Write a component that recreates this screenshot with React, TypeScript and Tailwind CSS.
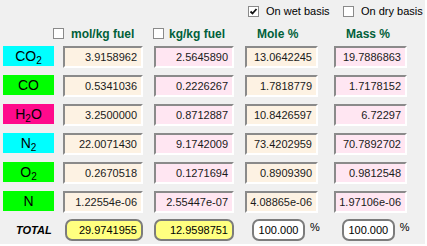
import React from "react";

const font = { fontFamily: '"Liberation Sans", Arial, sans-serif' };

type Row = { label: React.ReactNode; bg: string; v: [string, string, string, string] };

const Sub = ({ c }: { c: string }) => (
  <span className="relative top-[3px] text-[10px] leading-none">{c}</span>
);

const rows: Row[] = [
  { label: <>CO<Sub c="2" /></>, bg: "bg-[#00ffff]", v: ["3.9158962", "2.5645890", "13.0642245", "19.7886863"] },
  { label: <>CO</>, bg: "bg-[#00ff00]", v: ["0.5341036", "0.2226267", "1.7818779", "1.7178152"] },
  { label: <>H<Sub c="2" />O</>, bg: "bg-[#ff0a8c]", v: ["3.2500000", "0.8712887", "10.8426597", "6.72297"] },
  { label: <>N<Sub c="2" /></>, bg: "bg-[#00ffff]", v: ["22.0071430", "9.1742009", "73.4202959", "70.7892702"] },
  { label: <>O<Sub c="2" /></>, bg: "bg-[#00ff00]", v: ["0.2670518", "0.1271694", "0.8909390", "0.9812548"] },
  { label: <>N</>, bg: "bg-[#00ff00]", v: ["1.22554e-06", "2.55447e-07", "4.08865e-06", "1.97106e-06"] },
];

const Check = ({ checked }: { checked?: boolean }) => (
  <div className="w-[11px] h-[11px] bg-white border border-[#8a8a8a] flex items-center justify-center shrink-0">
    {checked && (
      <svg width="9" height="9" viewBox="0 0 9 9">
        <polyline points="1.5,4.5 3.5,6.5 7.5,2" fill="none" stroke="#111" strokeWidth="1.8" />
      </svg>
    )}
  </div>
);

const Field = ({ v, w, bg }: { v: string; w: string; bg: string }) => (
  <div
    className={`${w} ${bg} h-[22px] border-2 border-t-[#8a8a8a] border-l-[#8a8a8a] border-r-white border-b-white flex items-center justify-end pr-[4px] text-[11px] text-[#1a1a1a]`}
  >
    {v}
  </div>
);

export default function App() {
  return (
    <div
      className="w-[427px] h-[246px] bg-[#f0f0f0] border-r-2 border-b-2 border-white overflow-hidden text-black"
      style={font}
    >
      {/* top checkboxes */}
      <div className="flex items-center h-[11px] mt-[6px] pl-[248px] text-[11px] whitespace-nowrap">
        <Check checked />
        <span className="ml-[7px] w-[77px]">On wet basis</span>
        <Check />
        <span className="ml-[7px]">On dry basis</span>
      </div>
      {/* headers */}
      <div className="flex items-center h-[11px] mt-[11px] text-[12px] font-bold text-[#00603a] whitespace-nowrap">
        <div className="w-[100px] ml-[53px] flex items-center">
          <Check />
          <span className="ml-[7px]">mol/kg fuel</span>
        </div>
        <div className="w-[92px] flex items-center">
          <Check />
          <span className="ml-[5px]">kg/kg fuel</span>
        </div>
        <div className="w-[89px] pl-[12px]">Mole %</div>
        <div className="pl-[12px]">Mass %</div>
      </div>
      {/* rows */}
      <div className="flex flex-col gap-[7px] mt-[7px] pl-[3px]">
        {rows.map((r, i) => (
          <div key={i} className="flex items-start">
            <div className={`w-[51px] h-[20px] ${r.bg} flex items-center justify-center text-[14px] leading-none pb-[1px]`}>
              <span>{r.label}</span>
            </div>
            <div className="ml-[9px]">
              <Field v={r.v[0]} w="w-[80px]" bg="bg-[#fdf2e3]" />
            </div>
            <div className="ml-[11px]">
              <Field v={r.v[1]} w="w-[80px]" bg="bg-[#ffe6f2]" />
            </div>
            <div className="ml-[11px]">
              <Field v={r.v[2]} w="w-[73px]" bg="bg-[#fdf2e3]" />
            </div>
            <div className="ml-[16px]">
              <Field v={r.v[3]} w="w-[73px]" bg="bg-[#ffe6f2]" />
            </div>
          </div>
        ))}
      </div>
      {/* totals */}
      <div className="flex items-center mt-[6px] h-[22px] text-[11px]">
        <div className="ml-[16px] w-[49px] font-bold italic">TOTAL</div>
        <div className="w-[78px] h-[22px] rounded-[7px] border-2 border-[#7c7c7c] bg-[#ffff80] flex items-center justify-end pr-[4px]">
          29.9741955
        </div>
        <div className="ml-[11px] w-[80px] h-[22px] rounded-[7px] border-2 border-[#7c7c7c] bg-[#ffff80] flex items-center justify-end pr-[4px]">
          12.9598751
        </div>
        <div className="ml-[18px] w-[53px] h-[22px] rounded-[7px] border-2 border-[#7c7c7c] bg-white flex items-center justify-center">
          100.000
        </div>
        <span className="ml-[5px] mb-[5px]">%</span>
        <div className="ml-[22px] w-[53px] h-[22px] rounded-[7px] border-2 border-[#7c7c7c] bg-white flex items-center justify-center">
          100.000
        </div>
        <span className="ml-[5px] mb-[5px]">%</span>
      </div>
    </div>
  );
}
